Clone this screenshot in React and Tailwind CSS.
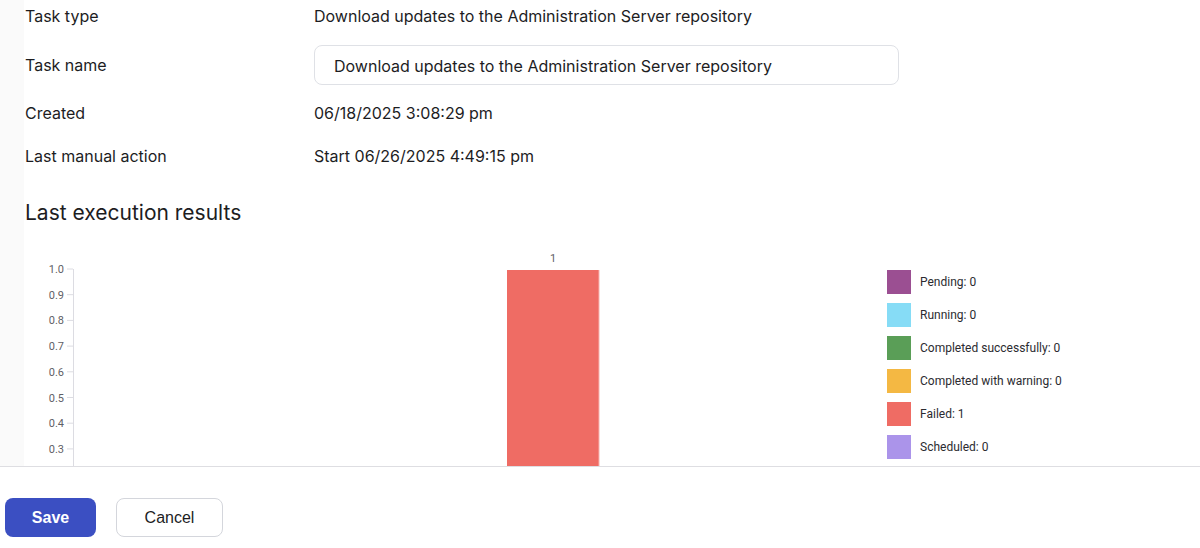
import React from 'react';

const legend = [
  { label: 'Pending: 0', color: 'bg-[#9b4f92]' },
  { label: 'Running: 0', color: 'bg-[#86dcf6]' },
  { label: 'Completed successfully: 0', color: 'bg-[#5a9e57]' },
  { label: 'Completed with warning: 0', color: 'bg-[#f4b843]' },
  { label: 'Failed: 1', color: 'bg-[#ef6c64]' },
  { label: 'Scheduled: 0', color: 'bg-[#ab94ea]' },
];

// only the ticks that show above the fold
const ticks = ['1.0', '0.9', '0.8', '0.7', '0.6', '0.5', '0.4', '0.3'];

const Row = ({ label, children, className }) => (
  <div className={'flex items-center ' + className}>
    <div className="w-[289px] shrink-0 text-[16px] text-[#1d1d1f]">{label}</div>
    <div className="flex-1 text-[16px] text-[#1d1d1f]">{children}</div>
  </div>
);

const Chart = () => {
  const top = 29;
  const step = 25.7;
  return (
    <svg width="830" height="230" className="block">
      {ticks.map((t, i) => {
        const y = top + i * step;
        return (
          <g key={t}>
            <text x="39" y={y + 4} textAnchor="end" fontSize="11" fill="#5f5f66" fontFamily="Roboto, sans-serif">{t}</text>
            <line x1="42" x2="48" y1={y} y2={y} stroke="#dcdce2" strokeWidth="1" />
          </g>
        );
      })}
      <line x1="48.5" x2="48.5" y1={top} y2="230" stroke="#dcdce2" strokeWidth="1" />
      <rect x="482" y={top + 1} width="92" height="230" fill="#ef6c64" />
      <line x1="574" x2="574" y1={top + 1} y2="230" stroke="#f7b3ae" strokeWidth="1" />
      <text x="528" y={top - 7} textAnchor="middle" fontSize="11" fill="#5f5f66" fontFamily="Roboto, sans-serif">1</text>
    </svg>
  );
};

export default function App() {
  return (
    <div className="w-[1200px] h-[548px] bg-white overflow-hidden font-['Inter',sans-serif] flex flex-col">
      <div className="h-[467px] flex overflow-hidden border-b border-[#dedee2]">
        <div className="w-[24px] shrink-0 bg-[#fafafa]" />
        <div className="flex-1 pl-px">
          <Row label="Task type" className="h-[32px]">Download updates to the Administration Server repository</Row>
          <Row label="Task name" className="mt-[13px] h-[40px]">
            <div className="w-[585px] h-[40px] rounded-[8px] border border-[#dfe1e6] flex items-center px-[19px] pt-px">
              Download updates to the Administration Server repository
            </div>
          </Row>
          <Row label="Created" className="mt-[16px] h-[24px]">06/18/2025 3:08:29 pm</Row>
          <Row label="Last manual action" className="mt-[19px] h-[24px]">Start 06/26/2025 4:49:15 pm</Row>
          <div className="mt-[31px] h-[28px] text-[21px] leading-[28px] text-[#1d1d1f]">Last execution results</div>
          <div className="mt-[13px] flex font-['Roboto',sans-serif]">
            <Chart />
            <div className="ml-[32px] mt-[30px] flex flex-col gap-[9px]">
              {legend.map((l) => (
                <div key={l.label} className="flex items-center h-[24px]">
                  <div className={'w-[24px] h-[24px] ' + l.color} />
                  <span className="ml-[9px] text-[12px] text-[#2b2b30]">{l.label}</span>
                </div>
              ))}
            </div>
          </div>
        </div>
      </div>
      <div className="flex items-center gap-[20px] pl-[5px] pt-[31px]">
        <button className="w-[91px] h-[39px] rounded-[8px] bg-[#3b4fc2] text-white text-[16px] font-semibold font-['Liberation_Sans',sans-serif]">Save</button>
        <button className="w-[107px] h-[39px] rounded-[8px] border border-[#d4d6dc] bg-white text-[#1d1d1f] text-[16px] font-medium font-['Liberation_Sans',sans-serif]">Cancel</button>
      </div>
    </div>
  );
}
